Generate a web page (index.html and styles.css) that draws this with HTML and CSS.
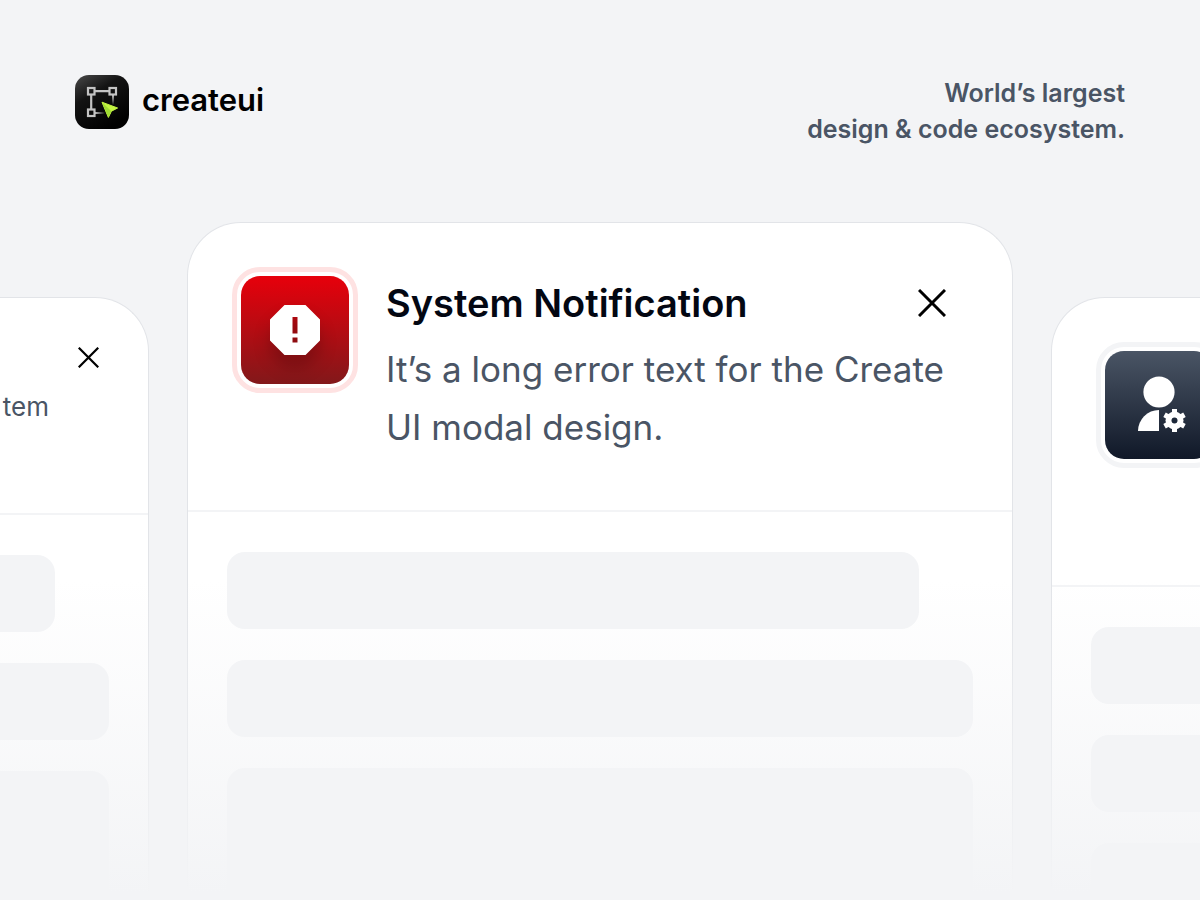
FILE: index.html
```html
<!DOCTYPE html>
<html lang="en">
<head>
  <meta charset="UTF-8">
  <meta name="viewport" content="width=device-width, initial-scale=1.0">
  <title>createui</title>
  <link rel="stylesheet" href="styles.css">
</head>
<body>

<header class="header">
  <a class="brand" href="#">
    <svg class="brand-icon" viewBox="0 0 54 54" aria-hidden="true">
      <defs>
        <linearGradient id="brand-bg" x1="0" y1="0" x2="0.6" y2="1">
          <stop offset="0" stop-color="#4a4a4a"/>
          <stop offset="0.4" stop-color="#141414"/>
          <stop offset="1" stop-color="#000"/>
        </linearGradient>
        <linearGradient id="fade-down" gradientUnits="userSpaceOnUse" x1="0" y1="20" x2="0" y2="30">
          <stop offset="0" stop-color="#c4c4c4"/>
          <stop offset="1" stop-color="#c4c4c4" stop-opacity="0"/>
        </linearGradient>
        <linearGradient id="fade-right" gradientUnits="userSpaceOnUse" x1="20" y1="0" x2="30" y2="0">
          <stop offset="0" stop-color="#c4c4c4"/>
          <stop offset="1" stop-color="#c4c4c4" stop-opacity="0"/>
        </linearGradient>
      </defs>
      <rect width="54" height="54" rx="14" fill="url(#brand-bg)"/>
      <g fill="none" stroke="#c4c4c4" stroke-width="2.2">
        <rect x="13" y="13" width="6.500" height="6.500"/>
        <rect x="34.500" y="13" width="6.500" height="6.500"/>
        <rect x="13" y="34.500" width="6.500" height="6.500"/>
        <path d="M20 16.200h14M16.200 20v14"/>
      </g>
      <rect x="37" y="20" width="2" height="10" fill="url(#fade-down)"/>
      <rect x="20" y="37" width="10" height="2" fill="url(#fade-right)"/>
      <path d="M27 27.200 42.600 33 36.400 36.200 33.400 42.400Z" fill="#c4f542" stroke="#c4f542" stroke-linejoin="round"/>
      <path d="M27 27.200 36.400 36.200 33.400 42.400Z" fill="#a0dc34"/>
    </svg>
    <span class="brand-name">createui</span>
  </a>
  <p class="tagline">World’s largest<br>design &amp; code ecosystem.</p>
</header>

<main class="stage">
  <section class="card card-side">
    <div class="card-head card-head-compact">
      <button class="close close-small" type="button" aria-label="Close">
        <svg viewBox="0 0 28 28"><path d="M1 1l26 26M27 1L1 27"/></svg>
      </button>
      <p class="note">tem</p>
    </div>
    <div class="card-body">
      <div class="bar bar-short"></div>
      <div class="bar"></div>
      <div class="bar bar-tall"></div>
    </div>
  </section>

  <section class="card">
    <div class="card-head">
      <div class="tile tile-red">
        <svg viewBox="0 0 108 108" aria-hidden="true">
          <path fill="#fff" fill-rule="evenodd" d="M43.500 29h21L79 43.500v21L64.500 79h-21L29 64.500v-21ZM51.500 41v16.500h5V41ZM51.500 61.500v5h5v-5Z"/>
        </svg>
      </div>
      <div class="card-text">
        <div class="title-row">
          <h1 class="title">System Notification</h1>
          <button class="close" type="button" aria-label="Close">
            <svg viewBox="0 0 28 28"><path d="M1 1l26 26M27 1L1 27"/></svg>
          </button>
        </div>
        <p class="message">It’s a long error text for the Create UI modal design.</p>
      </div>
    </div>
    <div class="card-body">
      <div class="bar bar-short"></div>
      <div class="bar"></div>
      <div class="bar bar-tall"></div>
    </div>
  </section>

  <section class="card card-side">
    <div class="card-head">
      <div class="tile tile-dark">
        <svg viewBox="0 0 108 108" aria-hidden="true">
          <circle cx="54" cy="41" r="15.600" fill="#fff"/>
          <path d="M33 80a21 21 0 0 1 21-21v21Z" fill="#fff"/>
          <g transform="translate(69.500 69.500)">
            <g stroke="#fff" stroke-width="5">
              <path d="M0-11.500v23"/>
              <path d="M0-11.500v23" transform="rotate(60)"/>
              <path d="M0-11.500v23" transform="rotate(120)"/>
            </g>
            <circle r="9" fill="#fff"/>
            <circle r="3" fill="#1d283a"/>
          </g>
        </svg>
      </div>
    </div>
    <div class="card-body">
      <div class="bar bar-short"></div>
      <div class="bar"></div>
      <div class="bar bar-tall"></div>
    </div>
  </section>
</main>

</body>
</html>
```

FILE: styles.css
```css
* {
  margin: 0;
  padding: 0;
  box-sizing: border-box;
}

body {
  background: #f3f4f6;
  color: #030712;
  font-family: Inter, "Liberation Sans", sans-serif;
  display: flex;
  flex-direction: column;
  min-height: 100vh;
  overflow: hidden;
}

.header {
  display: flex;
  justify-content: space-between;
  align-items: flex-start;
  padding: 75px;
}

.brand {
  display: flex;
  align-items: center;
  gap: 13px;
  color: #000;
  text-decoration: none;
}

.brand-icon {
  width: 54px;
  height: 54px;
}

.brand-name {
  font-size: 31px;
  font-weight: 600;
  line-height: 50px;
  padding-bottom: 4px;
}

.tagline {
  color: #4a5565;
  font-size: 25px;
  font-weight: 600;
  line-height: 36px;
  text-align: right;
}

.stage {
  position: relative;
  flex: 1;
  display: flex;
  justify-content: center;
  gap: 38px;
}

/* cards melt into the page background at the bottom */
.stage::after {
  content: "";
  position: absolute;
  left: 0;
  right: 0;
  bottom: 0;
  height: 320px;
  background: linear-gradient(180deg, rgba(243, 244, 246, 0) 0%, #f3f4f6 98%);
  pointer-events: none;
}

.card {
  flex: none;
  display: flex;
  flex-direction: column;
  width: calc(100% - 374px);
  background: #fff;
  border: 1px solid #e2e4e8;
  border-bottom: none;
  border-radius: 54px 54px 0 0;
}

.card-side {
  margin-top: 75px;
}

.card-head {
  display: flex;
  align-items: flex-start;
  gap: 28px;
  min-height: 289px;
  padding: 44px 66px 52px 44px;
  border-bottom: 2px solid #f3f4f6;
}

.card-head-compact {
  flex-direction: column;
  align-items: flex-end;
  gap: 20px;
  min-height: 217px;
  padding: 49px 49px 40px;
}

.tile {
  flex: none;
  width: 126px;
  height: 126px;
  padding: 4px;
  background: #fff;
  border: 5px solid #f3f4f6;
  border-radius: 28px;
}

.tile svg {
  display: block;
  width: 108px;
  height: 108px;
  border-radius: 19px;
}

.tile-red {
  border-color: #fee2e2;
}

.tile-red svg {
  background: linear-gradient(180deg, #e7000b, #82181a);
}

.tile-red path {
  filter: drop-shadow(0 12px 8px rgba(0, 0, 0, 0.2));
}

.tile-dark svg {
  background: linear-gradient(180deg, #4a5565, #101828);
}

.card-text {
  flex: 1;
  padding-top: 10px;
}

.title-row {
  display: flex;
  justify-content: space-between;
  align-items: center;
}

.title {
  font-size: 38px;
  font-weight: 600;
  line-height: 52px;
}

.message {
  margin-top: 11px;
  color: #4a5565;
  font-size: 35px;
  line-height: 58px;
}

.note {
  margin-right: 50px;
  color: #4a5565;
  font-size: 26px;
  line-height: 38px;
}

.close {
  width: 28px;
  height: 28px;
  background: none;
  border: none;
  cursor: pointer;
}

.close svg {
  display: block;
  width: 100%;
  height: 100%;
  fill: none;
  stroke: #000;
  stroke-width: 3;
}

.close-small {
  width: 21px;
  height: 21px;
}

.card-body {
  flex: 1;
  display: flex;
  flex-direction: column;
  gap: 31px;
  padding: 40px 39px 0;
}

.bar {
  height: 77px;
  background: #f3f4f6;
  border-radius: 18px;
}

.bar-short {
  width: calc(100% - 54px);
}

.bar-tall {
  flex: 1;
  border-radius: 18px 18px 0 0;
}
```
